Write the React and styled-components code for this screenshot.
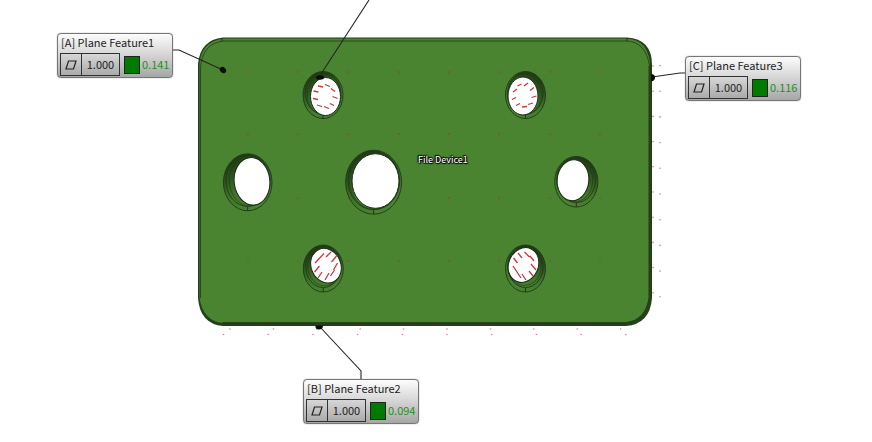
import React from "react";
import styled, { createGlobalStyle } from "styled-components";

const GlobalStyle = createGlobalStyle`
  * { box-sizing: border-box; }
  body {
    margin: 0;
    background: #fff;
    font-family: "Noto Sans CJK SC", "Noto Sans", sans-serif;
  }
`;

const Viewport = styled.main`
  position: relative;
  width: 100%;
  aspect-ratio: 872 / 442;
  overflow: hidden;
`;

const Drawing = styled.svg`
  display: block;
  width: 100%;
  height: 100%;
`;

/* Items pinned on the model view, placed in view coordinates. */
const Callout = styled.section`
  position: absolute;
  left: ${(p) => (p.$x / 872) * 100}%;
  top: ${(p) => (p.$y / 442) * 100}%;
  width: 116px;
  padding: 0 2px 1px;
  border: 1px solid #777;
  border-radius: 4px;
  background: linear-gradient(#fcfcfc, #d8d8d8 45%, #a6a6a6);
  box-shadow: 0 0 1px #555;
  color: #222;
  font-size: 11px;
`;

const Title = styled.h2`
  margin: 0 1px 2px;
  font-size: 11px;
  line-height: 17px;
  font-weight: 400;
  white-space: nowrap;
`;

const Readout = styled.div`
  display: flex;
  align-items: center;
  line-height: 21px;
`;

const Frame = styled.div`
  display: flex;
  flex: none;
  width: 60px;
  height: 23px;
  border: 1px solid #333;
`;

const SymbolCell = styled.span`
  display: grid;
  place-items: center;
  width: 21px;
  border-right: 1px solid #333;
`;

const Tolerance = styled.span`
  flex: 1;
  text-align: center;
`;

const Swatch = styled.span`
  flex: none;
  width: 16px;
  height: 18px;
  margin: 0 2px 0 4px;
  border: 1px solid #222;
  background: #007a00;
`;

const Measured = styled.output`
  color: #239023;
`;

const DeviceLabel = styled.span`
  position: absolute;
  left: ${(418 / 872) * 100}%;
  top: ${(153 / 442) * 100}%;
  color: #fff;
  font-size: 9px;
  line-height: 14px;
  white-space: nowrap;
  text-shadow: 1px 0 1px #111, -1px 0 1px #111, 0 1px 1px #111, 0 -1px 1px #111,
    1px 1px 1px #111, -1px -1px 1px #111;
`;

const callouts = [
  { x: 57, y: 33, title: "[A] Plane Feature1", value: "0.141" },
  { x: 685, y: 56, title: "[C] Plane Feature3", value: "0.116" },
  { x: 303, y: 379, title: "[B] Plane Feature2", value: "0.094" },
];

/* outer and inner ellipses: cx, cy, rx, ry; tilt turns the opening */
const holes = [
  { outer: [323, 95, 20, 23.5], inner: [325.5, 96.5, 15, 19], tilt: 0 },
  { outer: [525.5, 95, 20, 23.5], inner: [523, 96, 15, 19], tilt: 0 },
  { outer: [247.7, 182.3, 24.3, 28.5], inner: [252, 181.3, 17.8, 23.8], tilt: -6 },
  { outer: [373.6, 182.2, 28, 32], inner: [375.5, 181, 23.5, 27.3], tilt: 0 },
  { outer: [576.3, 181.7, 21.6, 25.3], inner: [573, 180.2, 15.8, 20.5], tilt: 6 },
  { outer: [323.3, 268.5, 20, 23.5], inner: [326, 265.7, 14.8, 17.8], tilt: -24 },
  { outer: [525.5, 268.5, 20, 23.5], inner: [523.5, 265, 14.8, 17.8], tilt: 24 },
];

const redMarks = [
  "M318 86l5 1M325 84.5l5 2M331 88.5l4 3M332.5 96.5l5 2M330 103.5l4 2M324 106.5l5 2M317 105l5 1.5M313 98.5l5 1M313.5 91l5 1",
  "M517.5 86l4-2M524 86l4-3M530 90.5l4-3M531.5 97.5l5-1.5M528 104.5l5-1.5M522 107l5-.5M516 105.5l4-2M512 99.5l4-2M513 92l4-3",
  "M315 263l9-9.5M326 257l5-5M331.5 262l5-6M333.5 270l4-7M330.5 276l4-6M325 280l4-7M318 278l4-6M314.5 272l5-6",
  "M518 253l4 5M524.5 252l5 5M530 256l4 5M531 264l5 6M529 271l4 5M522 274l4 6M513 266l8 12M513.5 258l4 5",
];

const gridDots = [72, 134, 198, 261].flatMap((y) =>
  [248, 298, 348, 399, 449, 499, 550, 600].map((x) => [x, y])
);

const edgeDots = [
  ...Array.from({ length: 10 }, (_, i) => [653, 66 + 25.2 * i]),
  ...Array.from({ length: 10 }, (_, i) => [660, 65.5 + 25.7 * i]),
  ...Array.from({ length: 10 }, (_, i) => [230 + 43.4 * i, 329]),
  ...Array.from({ length: 10 }, (_, i) => [223.5 + 44.7 * i, 334.5]),
];

function Hole({ id, outer, inner, tilt }) {
  const [cx, cy, rx, ry] = outer;
  const [ix, iy, irx, iry] = inner;
  const toRight = ix < cx;
  return (
    <g>
      <linearGradient id={id} x1={toRight ? 0.8 : 0.2} x2={toRight ? 0.3 : 0.7} y1="0" y2="1">
        <stop offset="0" stopColor="#1c3611" />
        <stop offset="0.3" stopColor="#2b531c" />
        <stop offset="0.6" stopColor="#407729" />
        <stop offset="1" stopColor="#4b8630" />
      </linearGradient>
      <ellipse cx={cx} cy={cy} rx={rx} ry={ry} fill={`url(#${id})`} stroke="#20371a" strokeWidth="0.9" />
      <ellipse
        cx={cx}
        cy={cy - 1.5}
        rx={rx - 2.5}
        ry={ry - 3}
        fill="none"
        stroke="#20371a"
        strokeWidth="0.9"
      />
      <ellipse
        cx={(cx + ix) / 2}
        cy={(cy + iy) / 2 - 1}
        rx={(rx + irx) / 2 - 0.5}
        ry={(ry + iry) / 2 - 1}
        fill="none"
        stroke="#20371a"
        strokeWidth="0.6"
      />
      <path d={`M${cx} ${cy + ry - 4}v4`} stroke="#20371a" />
      <ellipse
        cx={ix}
        cy={iy}
        rx={irx}
        ry={iry}
        fill="#fff"
        stroke="#1c2b17"
        transform={`rotate(${tilt} ${ix} ${iy})`}
      />
    </g>
  );
}

function Part() {
  return (
    <Drawing viewBox="0 0 872 442" role="img" aria-label="Inspected plate with seven holes">
      <path
        d="M223 37.5H627Q652 39 652 65V298Q650 324 626 326H223Q200 324 198 298V64Q200 40 223 37.5Z"
        fill="#24401a"
      />
      <path
        d="M223 38.5H627Q648 40 650 64V298Q647 322 626 323H223Q203 321 199.500 298V64Q201 42 223 38.500Z"
        fill="#4b8430"
      />
      <path
        d="M200.500 298V68Q202 44 223 41H627Q646 42 649.500 66V298Q646 321 626 322.500H223"
        fill="none"
        stroke="#294b1c"
      />
      <path d="M649.5 66V298Q646 321 626 323.5H222" fill="none" stroke="#263f1b" strokeWidth="2" />
      <path d="M222 38v3M627 38v3" stroke="#20371a" />
      {gridDots.map(([x, y]) => (
        <circle key={`${x}-${y}`} cx={x} cy={y} r="0.9" fill="#96482a" opacity="0.8" />
      ))}
      {edgeDots.map(([x, y]) => (
        <circle key={`${x}-${y}`} cx={x} cy={y} r="0.8" fill="#e04545" opacity="0.7" />
      ))}
      {holes.map((hole, i) => (
        <Hole key={i} id={`bore-${i}`} {...hole} />
      ))}
      {redMarks.map((d, i) => (
        <path key={i} d={d} fill="none" stroke="#c9383a" strokeWidth="1.3" />
      ))}
      <g fill="none" stroke="#252525" strokeWidth="1.1">
        <path d="M173 50h6L223 70" />
        <path d="M369 0L321 74" />
        <path d="M652 77l28-4h6" />
        <path d="M320 327l41 44v9" />
      </g>
      <g fill="#0a0f08">
        <ellipse cx="223" cy="70" rx="3.5" ry="2.7" transform="rotate(45 223 70)" />
        <ellipse cx="320" cy="77.5" rx="4" ry="2.2" />
        <path d="M651 74q4 0 4 3.500t-4 4z" />
        <path d="M315.500 325.500h7.500q0 4-4 4t-3.500-4z" />
      </g>
    </Drawing>
  );
}

function FeatureCallout({ x, y, title, value }) {
  return (
    <Callout $x={x} $y={y}>
      <Title>{title}</Title>
      <Readout>
        <Frame>
          <SymbolCell>
            <svg width="12" height="10" viewBox="0 0 12 10" role="img" aria-label="Flatness">
              <path d="M3.5 1h7.500L8.500 9H1z" fill="none" stroke="#222" strokeWidth="1.2" />
            </svg>
          </SymbolCell>
          <Tolerance>1.000</Tolerance>
        </Frame>
        <Swatch />
        <Measured>{value}</Measured>
      </Readout>
    </Callout>
  );
}

export default function App() {
  return (
    <>
      <GlobalStyle />
      <Viewport>
        <Part />
        <DeviceLabel>File Device1</DeviceLabel>
        {callouts.map((callout) => (
          <FeatureCallout key={callout.title} {...callout} />
        ))}
      </Viewport>
    </>
  );
}
